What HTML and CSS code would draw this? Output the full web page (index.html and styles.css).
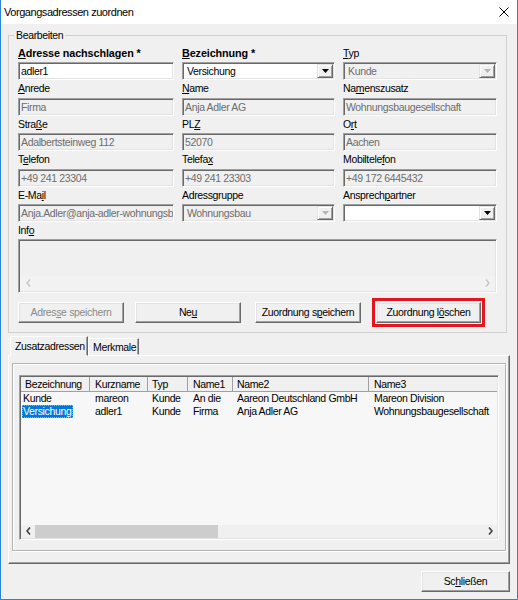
FILE: index.html
```html
<!DOCTYPE html>
<html lang="de">
<head>
<meta charset="utf-8">
<title>Vorgangsadressen zuordnen</title>
<link rel="stylesheet" href="styles.css">
</head>
<body>
<div class="window">
  <div class="titlebar">
    <span class="title">Vorgangsadressen zuordnen</span>
    <svg class="close" width="10" height="10" viewBox="0 0 10 10"><path d="M0.5 0.5L9.5 9.5M9.5 0.5L0.5 9.5" stroke="#000" stroke-width="1" fill="none"/></svg>
  </div>
  <div class="group">
    <span class="legend">Bearbeiten</span>
    <div class="fields">
      <div class="field"><div class="lbl bold"><u>A</u>dresse nachschlagen *</div><div class="edit">adler1</div></div>
      <div class="field"><div class="lbl bold"><u>B</u>ezeichnung *</div><div class="combo"><span class="ctext">Versichung</span><span class="arrow"><svg width="7" height="4" viewBox="0 0 7 4"><path d="M0 0H7L3.5 4Z" fill="#000"/></svg></span></div></div>
      <div class="field"><div class="lbl"><u>T</u>yp</div><div class="combo dis"><span class="ctext">Kunde</span><span class="arrow"><svg width="7" height="4" viewBox="0 0 7 4"><path d="M0 0H7L3.5 4Z" fill="#b4b4b4"/></svg></span></div></div>

      <div class="field"><div class="lbl"><u>A</u>nrede</div><div class="edit dis">Firma</div></div>
      <div class="field"><div class="lbl"><u>N</u>ame</div><div class="edit dis">Anja Adler AG</div></div>
      <div class="field"><div class="lbl">Na<u>m</u>enszusatz</div><div class="edit dis">Wohnungsbaugesellschaft</div></div>

      <div class="field"><div class="lbl">Stra<u>ß</u>e</div><div class="edit dis">Adalbertsteinweg 112</div></div>
      <div class="field"><div class="lbl">PL<u>Z</u></div><div class="edit dis">52070</div></div>
      <div class="field"><div class="lbl">O<u>r</u>t</div><div class="edit dis">Aachen</div></div>

      <div class="field"><div class="lbl">T<u>e</u>lefon</div><div class="edit dis">+49 241 23304</div></div>
      <div class="field"><div class="lbl">Telefa<u>x</u></div><div class="edit dis">+49 241 23303</div></div>
      <div class="field"><div class="lbl">Mobiltele<u>f</u>on</div><div class="edit dis">+49 172 6445432</div></div>

      <div class="field"><div class="lbl">E-Ma<u>i</u>l</div><div class="edit dis">Anja.Adler@anja-adler-wohnungsba</div></div>
      <div class="field"><div class="lbl">Adressgruppe</div><div class="combo dis"><span class="ctext">Wohnungsbau</span><span class="arrow"><svg width="7" height="4" viewBox="0 0 7 4"><path d="M0 0H7L3.5 4Z" fill="#b4b4b4"/></svg></span></div></div>
      <div class="field"><div class="lbl">Ansprech<u>p</u>artner</div><div class="combo white"><span class="ctext"></span><span class="arrow"><svg width="7" height="4" viewBox="0 0 7 4"><path d="M0 0H7L3.5 4Z" fill="#000"/></svg></span></div></div>
    </div>
    <div class="lbl info-lbl">Inf<u>o</u></div>
    <div class="info">
      <div class="hscroll">
        <span class="sbtn"><svg width="5" height="8" viewBox="0 0 5 8"><path d="M4 0.5L1 4L4 7.5" stroke="#c4c4c4" stroke-width="1.3" fill="none"/></svg></span>
        <span class="sbtn"><svg width="5" height="8" viewBox="0 0 5 8"><path d="M1 0.5L4 4L1 7.5" stroke="#c4c4c4" stroke-width="1.3" fill="none"/></svg></span>
      </div>
    </div>
    <div class="btnrow">
      <button class="btn b1 disabled">Adres<u>s</u>e speichern</button>
      <button class="btn b2">Ne<u>u</u></button>
      <button class="btn b3">Zuordnung s<u>p</u>eichern</button>
      <button class="btn b4 marked">Zuordnung l<u>ö</u>schen</button>
    </div>
  </div>

  <div class="tabs">
    <div class="tab active">Zusatzadressen</div>
    <div class="tab">Merkmale</div>
  </div>
  <div class="tabbody">
    <div class="frame">
      <div class="listview">
        <div class="lv-head">
          <div class="hc c1">Bezeichnung</div>
          <div class="hc c2">Kurzname</div>
          <div class="hc c3">Typ</div>
          <div class="hc c4">Name1</div>
          <div class="hc c5">Name2</div>
          <div class="hc c6">Name3</div>
        </div>
        <div class="lv-rows">
          <div class="lv-row">
            <div class="bc c1"><span class="cell1">Kunde</span></div>
            <div class="bc c2">mareon</div>
            <div class="bc c3">Kunde</div>
            <div class="bc c4">An die</div>
            <div class="bc c5">Aareon Deutschland GmbH</div>
            <div class="bc c6">Mareon Division</div>
          </div>
          <div class="lv-row">
            <div class="bc c1"><span class="cell1 sel">Versichung</span></div>
            <div class="bc c2">adler1</div>
            <div class="bc c3">Kunde</div>
            <div class="bc c4">Firma</div>
            <div class="bc c5">Anja Adler AG</div>
            <div class="bc c6">Wohnungsbaugesellschaft</div>
          </div>
        </div>
        <div class="lv-scroll">
          <span class="lbtn"><svg width="5" height="8" viewBox="0 0 5 8"><path d="M4 0.5L1 4L4 7.5" stroke="#404040" stroke-width="1.6" fill="none"/></svg></span>
          <span class="thumb"></span>
          <span class="spacer"></span>
          <span class="lbtn"><svg width="5" height="8" viewBox="0 0 5 8"><path d="M1 0.5L4 4L1 7.5" stroke="#404040" stroke-width="1.6" fill="none"/></svg></span>
        </div>
      </div>
    </div>
  </div>
  <div class="footer">
    <button class="btn close-btn">Sc<u>h</u>ließen</button>
  </div>
</div>
</body>
</html>
```
FILE: styles.css
```css
* { box-sizing: border-box; }
html, body { margin: 0; padding: 0; }
body {
  width: 518px;
  height: 600px;
  background: #f0f0f0;
  font-family: "Liberation Sans", Arial, sans-serif;
  font-size: 10.5px;
  letter-spacing: -0.35px;
  color: #000;
}
u { text-decoration: underline; text-underline-offset: 1px; }

.window {
  width: 518px;
  height: 600px;
  border: 1px solid #2a86d8;
  border-top: 0;
  background: #f0f0f0;
  display: flex;
  flex-direction: column;
}

.titlebar {
  height: 24px;
  flex: none;
  background: #fff;
  display: flex;
  align-items: center;
  justify-content: space-between;
  padding: 0 8px 0 3px;
}
.title { font-size: 11px; letter-spacing: -0.45px; }
.close { display: block; }

/* group box */
.group {
  position: relative;
  margin: 11px 0 0 7px;
  width: 499px;
  border: 1px solid #d0d0d0;
  padding: 9px 9px 9px 9px;
  flex: none;
}
.legend {
  position: absolute;
  top: -7px;
  left: 5px;
  padding: 0 2px;
  background: #f0f0f0;
  line-height: 12px;
}
.fields {
  display: grid;
  grid-template-columns: 156px 153px 154px;
  column-gap: 8px;
}
.field { display: flex; flex-direction: column; min-width: 0; }
.lbl {
  height: 17.4px;
  line-height: 17.4px;
  white-space: nowrap;
}
.lbl.bold { font-weight: bold; letter-spacing: -0.1px; font-size: 10.8px; }
.info-lbl { height: 17px; line-height: 17px; }

.edit, .combo, .info {
  height: 18px;
  border: 1px solid;
  border-color: #a0a0a0 #fff #fff #a0a0a0;
  box-shadow: inset 1px 1px 0 #696969, inset -1px -1px 0 #e3e3e3;
  background: #fff;
  white-space: nowrap;
  overflow: hidden;
}
.edit {
  padding: 0 2px;
  line-height: 16px;
}
.edit.dis, .combo.dis { background: #f0f0f0; color: #6d6d6d; }

.combo {
  display: flex;
  align-items: stretch;
  padding: 1px;
}
.ctext {
  flex: 1;
  padding-left: 3px;
  line-height: 14px;
  overflow: hidden;
}
.arrow {
  width: 16px;
  flex: none;
  display: flex;
  align-items: center;
  justify-content: center;
  background: #f0f0f0;
  border: 1px solid;
  border-color: #e3e3e3 #696969 #696969 #e3e3e3;
  box-shadow: inset 1px 1px 0 #fff, inset -1px -1px 0 #a0a0a0;
}
.arrow svg { display: block; }

.info {
  height: 54px;
  background: #f0f0f0;
  display: flex;
  flex-direction: column;
  justify-content: flex-end;
  padding: 1px;
}
.hscroll {
  height: 15px;
  display: flex;
  justify-content: space-between;
  background: #f2f2f2;
}
.sbtn {
  width: 16px;
  display: flex;
  align-items: center;
  justify-content: center;
}
.sbtn svg { display: block; }

.btnrow {
  display: flex;
  margin-top: 9px;
}
.btn {
  width: 106px;
  height: 21px;
  padding: 0;
  margin: 0;
  background: #f0f0f0;
  border: 1px solid;
  border-color: #fff #696969 #696969 #fff;
  box-shadow: inset -1px -1px 0 #a0a0a0, inset 1px 1px 0 #e3e3e3;
  font: inherit;
  letter-spacing: inherit;
  color: #000;
  white-space: nowrap;
}
.btn.disabled { color: #8a8a8a; }
.b2 { margin-left: 11px; }
.b3 { margin-left: 14px; }
.b4 { margin-left: 15px; width: 105px; }
.marked {
  outline: 3px solid #e4151d;
  outline-offset: 1px;
}

/* tabs */
.tabs {
  display: flex;
  align-items: flex-start;
  margin: 3px 0 0 9px;
  height: 19px;
  flex: none;
}
.tab {
  height: 17px;
  margin-top: 2px;
  padding: 0 4px;
  line-height: 16px;
  border: 1px solid;
  border-color: #fff #696969 transparent #fff;
  box-shadow: inset -1px 0 0 #a0a0a0;
  width: 51px;
  text-align: center;
}
.tab.active {
  position: relative;
  z-index: 1;
  width: 78px;
  height: 20px;
  margin-top: 0;
  line-height: 19px;
  background: #f0f0f0;
  border-color: #fff #696969 #f0f0f0 #fff;
}

.tabbody {
  margin-left: 7px;
  width: 502px;
  height: 209px;
  flex: none;
  border: 1px solid;
  border-color: #fff #696969 #696969 #fff;
  box-shadow: inset -1px -1px 0 #a0a0a0;
  padding: 7px 0 0 3px;
}
.frame {
  width: 494px;
  height: 188px;
  border: 1px solid #b4b4b4;
  box-shadow: 1px 1px 0 #fff, inset 1px 1px 0 #fff;
  padding: 11px 0 0 6px;
}
.listview {
  width: 480px;
  height: 165px;
  border: 1px solid;
  border-color: #a0a0a0 #fff #fff #a0a0a0;
  box-shadow: inset 1px 1px 0 #696969, inset -1px -1px 0 #e3e3e3;
  padding: 1px;
  background: #f7f7f7;
  display: flex;
  flex-direction: column;
}
.lv-head {
  display: flex;
  height: 15px;
  flex: none;
  background: #f0f0f0;
  border-bottom: 1px solid #a0a0a0;
}
.hc {
  line-height: 14px;
  padding-left: 5px;
  border-right: 1px solid #a0a0a0;
  white-space: nowrap;
  overflow: hidden;
}
.c1 { width: 69px; }
.c2 { width: 58px; }
.c3 { width: 40px; }
.c4 { width: 45px; }
.c5 { width: 136px; }
.c6 { flex: 1; }
.hc.c1 { padding-left: 4px; }
.hc.c3, .hc.c5 { padding-left: 4px; }
.hc.c6 { border-right: 0; }

.lv-rows { flex: 1; }
.lv-row { display: flex; height: 13px; }
.bc {
  line-height: 13px;
  padding-left: 5px;
  white-space: nowrap;
  overflow: hidden;
}
.bc.c1 { padding-left: 1px; }
.bc.c3, .bc.c5 { padding-left: 4px; }
.cell1 { display: inline-block; padding: 0 1px; height: 13px; line-height: 13px; }
.sel {
  background: #0078d7;
  color: #fff;
  padding: 0 2px 0 1px;
  outline: 1px dotted #7fb8ea;
  outline-offset: -1px;
}

.lv-scroll {
  height: 13px;
  flex: none;
  display: flex;
  background: #f0f0f0;
}
.lbtn {
  width: 14px;
  display: flex;
  align-items: center;
  justify-content: center;
}
.lbtn svg { display: block; }
.thumb {
  width: 183px;
  background: #cdcdcd;
}
.spacer { flex: 1; }

.footer {
  margin: 7px 0 0 7px;
  width: 502px;
  display: flex;
  justify-content: flex-end;
  flex: none;
}
.close-btn { width: 89px; }
```
